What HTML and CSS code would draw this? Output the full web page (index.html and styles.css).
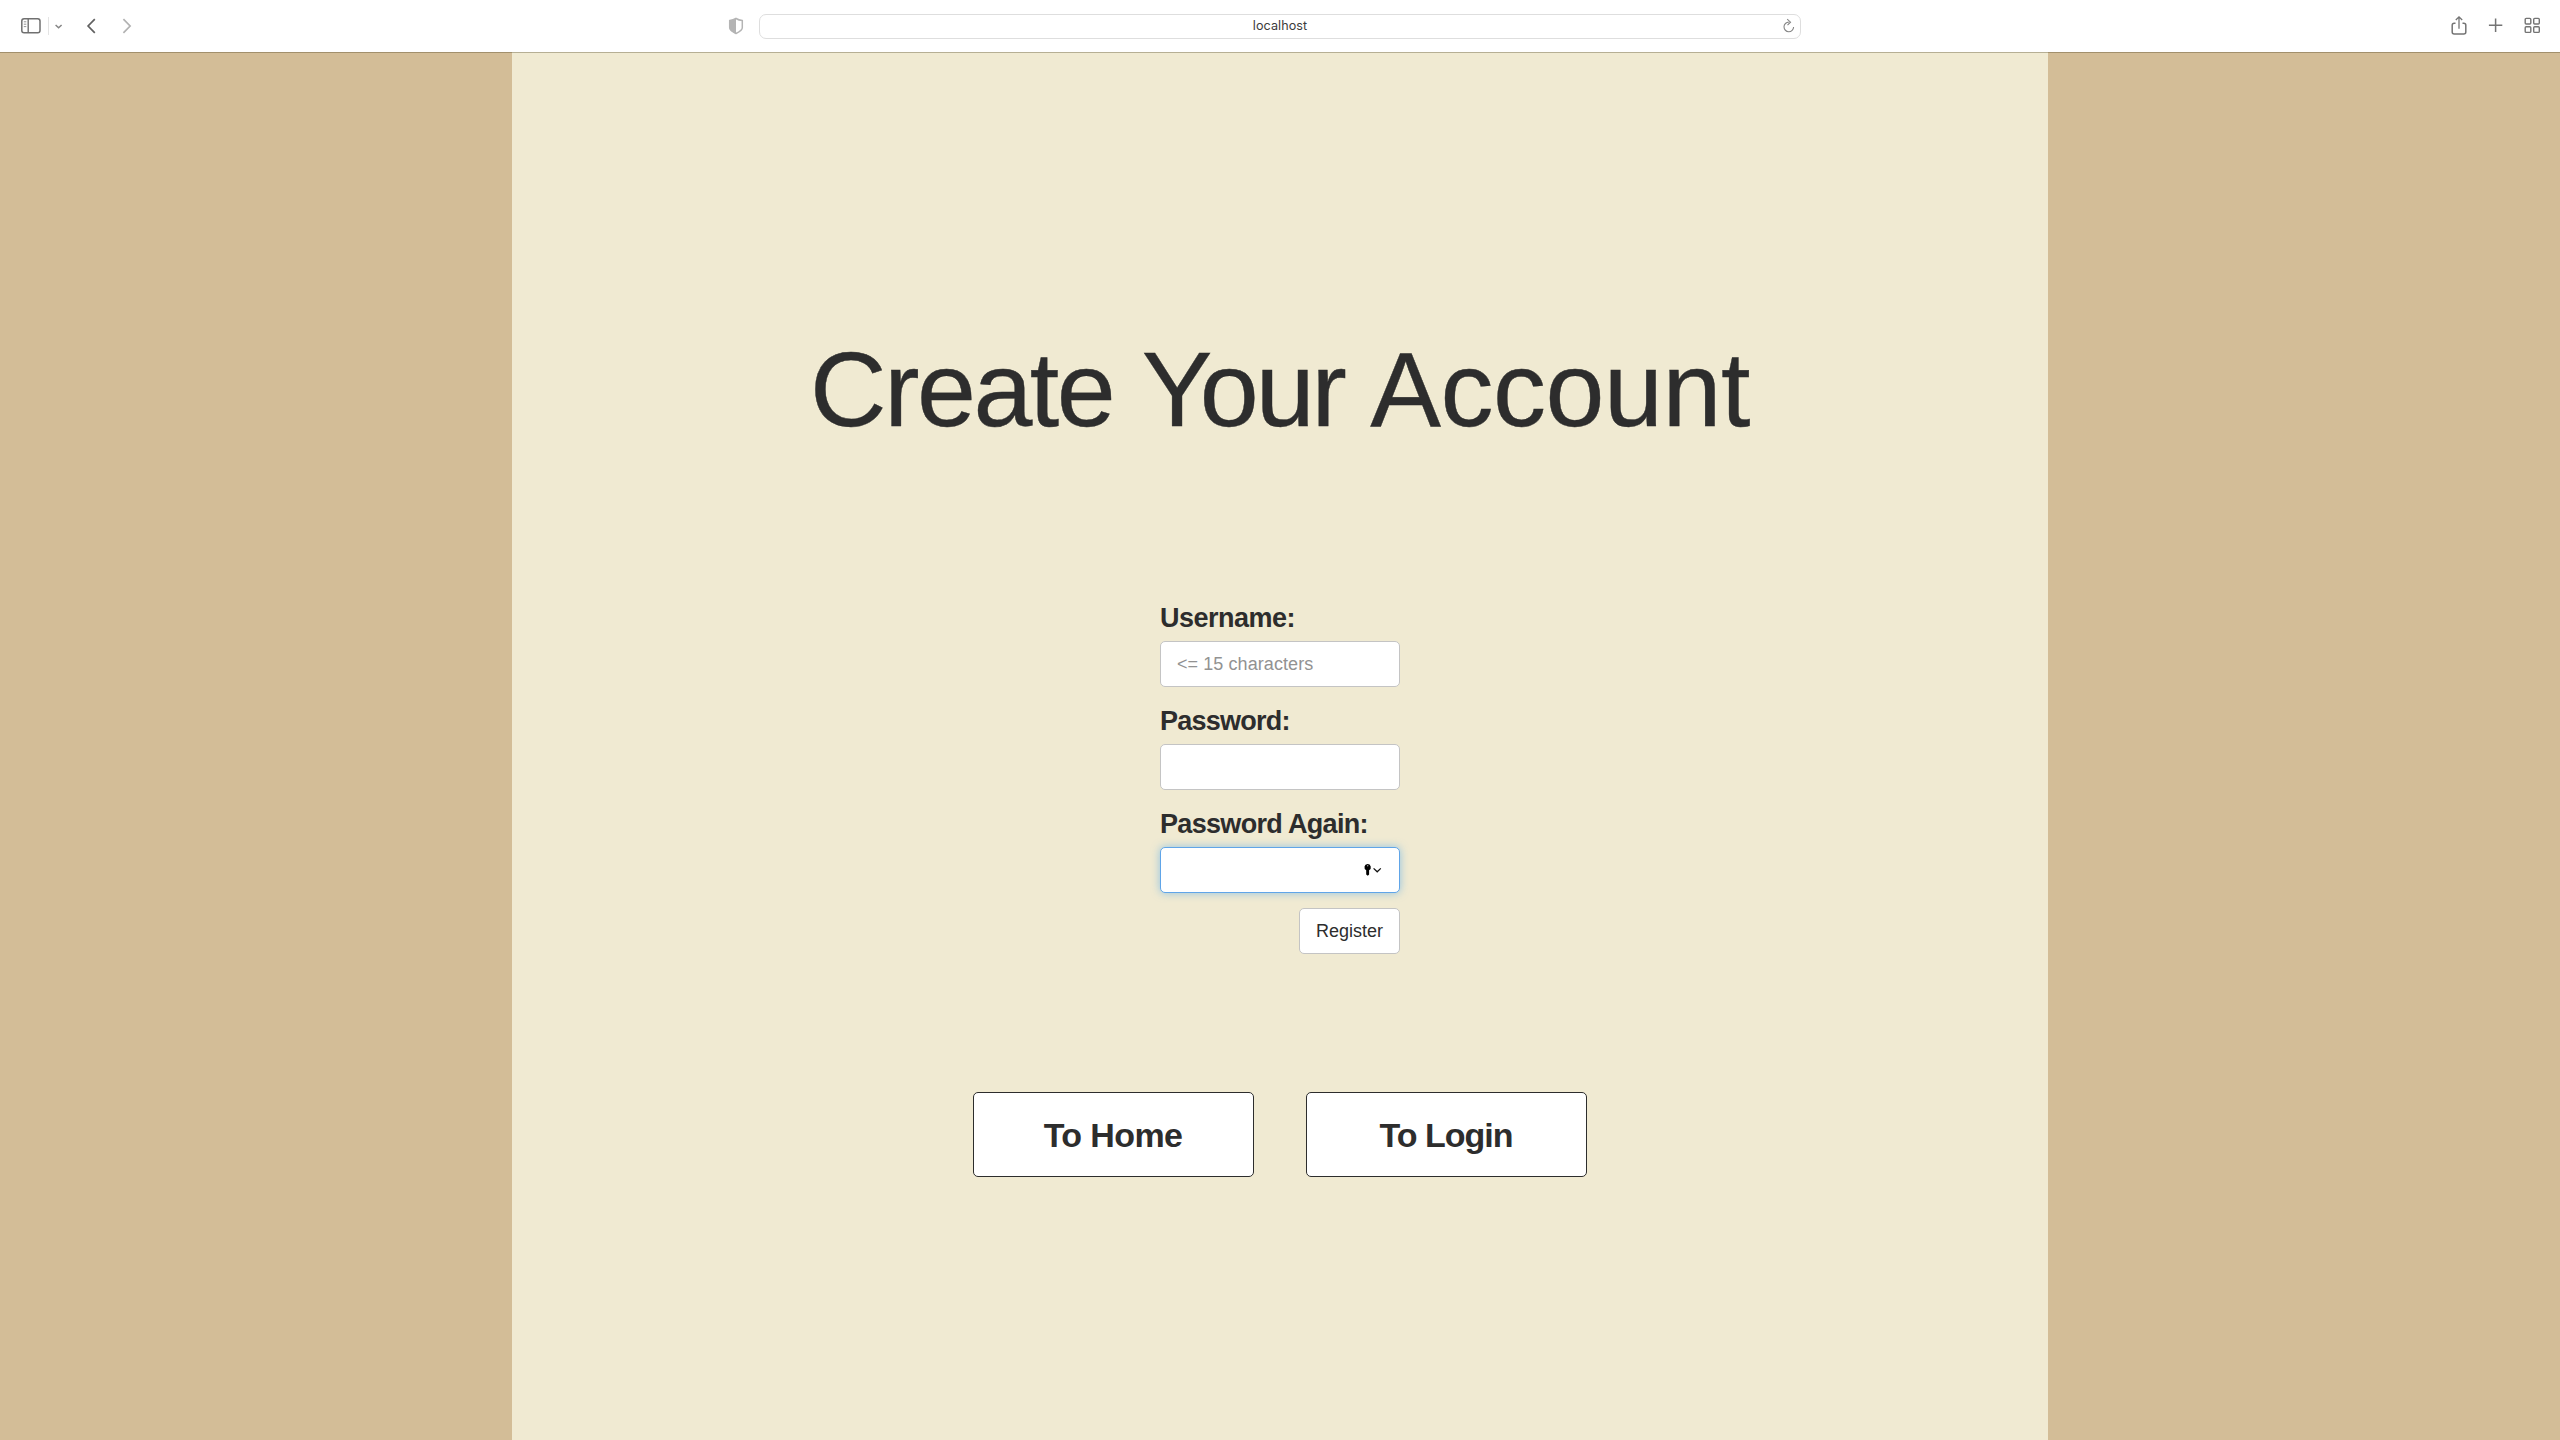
FILE: index.html
```html
<!DOCTYPE html>
<html lang="en">
<head>
<meta charset="utf-8">
<title>localhost</title>
<link rel="stylesheet" href="styles.css">
</head>
<body>
<header class="toolbar">
  <div class="tools-left">
    <svg class="icon" width="90" height="30" viewBox="0 0 90 30" fill="none" style="color:#707070">
      <rect x="1.8" y="7.7" width="18.2" height="14" rx="2.3" stroke="currentColor" stroke-width="1.5"/>
      <path d="M8.2 7.7v14" stroke="currentColor" stroke-width="1.4"/>
      <path d="M3.8 10.8h2.5M3.8 13.2h2.5M3.8 15.6h2.5" stroke="#959595"/>
      <path d="M28.5 6v18" stroke="#e4e4e4"/>
      <path d="M35.6 14l3 2.7 3-2.7" stroke="#858585" stroke-width="1.5"/>
    </svg>
    <svg class="icon" width="50" height="30" viewBox="0 0 50 30" fill="none" stroke-width="1.7">
      <path d="M8.8 8.2L2.1 15l6.7 6.8" stroke="#606060"/>
      <path d="M37.4 8.2l6.7 6.8-6.7 6.8" stroke="#b2b2b2"/>
    </svg>
  </div>
  <div class="tools-center">
    <svg class="icon" width="16" height="18" viewBox="0 0 16 18">
      <path d="M8 1.5C6 2.8 4 3.4 1.7 3.6v7.2c0 2.4 3.4 4.3 6.3 5.7 2.9-1.4 6.3-3.3 6.3-5.7V3.6C12 3.4 10 2.8 8 1.5z" fill="none" stroke="#b4b4b4" stroke-width="1.5"/>
      <path d="M8 1.2C6 2.6 4 3.2 1.5 3.4v7.4c0 2.4 3.4 4.6 6.5 6z" fill="#b4b4b4"/>
    </svg>
    <div class="address"><span class="host">localhost</span>
      <svg class="reload" width="14" height="16" viewBox="0 0 14 16" fill="none" stroke="#858585" stroke-width="1.1">
        <path d="M6.8 4.1A4.8 4.8 0 1 0 11.6 9"/><path d="M5.2 1.2L8.5 4.2 5.5 7.2"/>
      </svg>
    </div>
  </div>
  <svg class="icon tools-right" width="92" height="22" viewBox="0 0 92 22" fill="none" stroke="#747474" stroke-width="1.5">
    <path d="M5.5 8.2H4.2a2 2 0 0 0-2 2v6.7a2 2 0 0 0 2 2h9.6a2 2 0 0 0 2-2v-6.7a2 2 0 0 0-2-2h-1.3"/>
    <path d="M9 13.8V2M5.8 5L9 1.8 12.2 5" stroke-width="1.3"/>
    <path d="M38.9 10.3h13.4M45.6 3.6V17"/>
    <g stroke-width="1.4"><rect x="75.2" y="3.4" width="5.6" height="5.6" rx="1"/><rect x="83.7" y="3.4" width="5.6" height="5.6" rx="1"/><rect x="75.2" y="11.8" width="5.6" height="5.6" rx="1"/><rect x="83.7" y="11.8" width="5.6" height="5.6" rx="1"/></g>
  </svg>
</header>
<main class="page">
  <h1 class="title"><span class="word-create">Create</span> <span class="word-your">Your</span> <span class="word-account">Account</span></h1>
  <form class="form">
    <label class="label label-user" for="user">Username:</label>
    <input class="field" id="user" type="text" placeholder="&lt;= 15 characters">
    <label class="label label-pass" for="pass">Password:</label>
    <input class="field" id="pass" type="password">
    <label class="label label-again" for="again">Password Again:</label>
    <div class="field field-active">
      <input class="bare" id="again" type="password">
      <svg width="18" height="14" viewBox="0 0 18 14">
        <path fill="#000" d="M3.5 1a3.3 3.3 0 0 1 1.6 6.2v4.3L3.8 12.8 2.2 11.5V7.2A3.3 3.3 0 0 1 3.5 1z"/>
        <circle cx="3.7" cy="2.8" r=".7" fill="#aaa"/>
        <path d="M9.6 5.4l3.6 3.4 3.6-3.4" fill="none" stroke="#111" stroke-width="1.3"/>
      </svg>
    </div>
    <button class="register" type="button">Register</button>
  </form>
  <nav class="links">
    <a class="link link-home"><span>To Home</span></a>
    <a class="link link-login"><span>To Login</span></a>
  </nav>
</main>
</body>
</html>
```
FILE: styles.css
```css
* { box-sizing: border-box; }
body {
  margin: 0;
  height: 1440px;
  overflow: hidden;
  background: #d3bd97;
  color: #2d2d2d;
  font-family: "Liberation Sans", Arial, sans-serif;
}
.toolbar {
  position: relative;
  z-index: 1;
  height: 53px;
  margin-bottom: -1px;
  display: grid;
  grid-template-columns: 728px 1073px 1fr;
  align-items: center;
  background: #fff;
  border-bottom: 1px solid rgba(60, 50, 20, .32);
  background-clip: padding-box;
}
.icon { display: block; }
.tools-left { display: flex; padding-left: 20px; }
.tools-left .icon + .icon { margin-left: -24px; }
.tools-center { display: flex; align-items: center; gap: 15px; }
.address {
  width: 1042px;
  height: 25px;
  display: grid;
  grid-template-columns: 20px 1fr 20px;
  align-items: center;
  border: 1px solid #dedede;
  border-radius: 7px;
}
.host {
  grid-column: 2;
  text-align: center;
  font: 12.6px/22px Inter, sans-serif;
  letter-spacing: .05px;
  color: #3c3c3c;
}
.reload { display: block; margin-left: 2px; }
.tools-right { justify-self: end; margin-right: 18px; }

.page {
  width: 1536px;
  height: 1388px;
  margin: 0 auto;
  padding-top: 275px;
  display: flex;
  flex-direction: column;
  align-items: center;
  background: #f0ead2;
}
.title {
  margin: 0;
  font-size: 106px;
  line-height: 124px;
  font-weight: 400;
  white-space: nowrap;
  -webkit-text-stroke: .4px #2d2d2d;
}
.word-create { letter-spacing: -2.5px; }
.word-your { letter-spacing: -3px; margin-left: -1px; }
.word-account { letter-spacing: -.5px; margin-left: -3px; }
.form {
  width: 240px;
  margin-top: 149px;
  display: flex;
  flex-direction: column;
}
.label {
  height: 41px;
  font-size: 27px;
  line-height: 36px;
  font-weight: 700;
  white-space: nowrap;
}
.label-user { letter-spacing: -.5px; }
.label-pass { letter-spacing: -.75px; }
.label-again { letter-spacing: -.68px; }
.field {
  width: 240px;
  height: 46px;
  margin: 0 0 16px;
  padding: 0 16px;
  border: 1px solid #c4c4c4;
  border-radius: 5px;
  background: #fff;
  font: 18px/44px "Liberation Sans", Arial, sans-serif;
}
.field::placeholder { color: #929292; opacity: 1; letter-spacing: .08px; }
.field-active {
  display: flex;
  align-items: center;
  margin-bottom: 15px;
  border-color: #60a5e8;
  box-shadow: 0 0 8px rgba(82, 168, 236, .6);
}
.field-active svg { margin-right: 1px; }
.bare { flex: 1; min-width: 0; border: 0; padding: 0; outline: 0; background: none; }
.register {
  align-self: flex-end;
  width: 101px;
  height: 46px;
  padding: 0;
  border: 1px solid #c4c4c4;
  border-radius: 5px;
  background: #fff;
  color: #2d2d2d;
  font: 18px/44px "Liberation Sans", Arial, sans-serif;
}
.links { display: flex; gap: 52px; margin-top: 138px; }
.link {
  width: 281px;
  height: 85px;
  display: flex;
  justify-content: center;
  border: 1px solid #2d2d2d;
  border-radius: 5px;
  background: #fff;
  font-size: 34px;
  line-height: 85px;
  font-weight: 700;
}
.link span { margin-right: 1px; }
.link-home { letter-spacing: -.6px; }
.link-login { letter-spacing: -1px; }
```
